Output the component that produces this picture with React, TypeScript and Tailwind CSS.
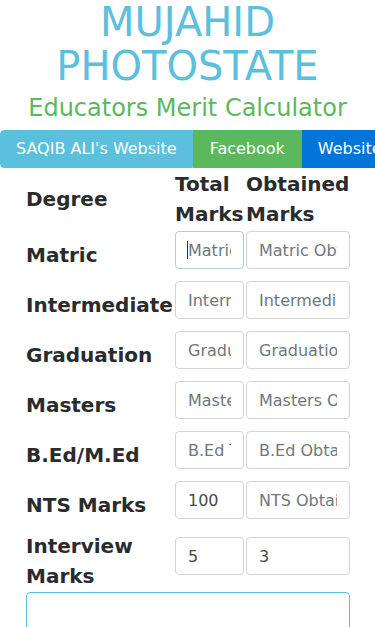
import React from "react";

const rows: { label: string; total: string; obtained: string; tv?: string; ov?: string }[] = [
  { label: "Matric", total: "Matric Total", obtained: "Matric Obtained" },
  { label: "Intermediate", total: "Intermediate Total", obtained: "Intermediate Obtained" },
  { label: "Graduation", total: "Graduation Total", obtained: "Graduation Obtained" },
  { label: "Masters", total: "Masters Total", obtained: "Masters Obtained" },
  { label: "B.Ed/M.Ed", total: "B.Ed Total", obtained: "B.Ed Obtained" },
  { label: "NTS Marks", total: "NTS Total", obtained: "NTS Obtained", tv: "100" },
  { label: "Interview Marks", total: "Interview Total", obtained: "Interview Obtained", tv: "5", ov: "3" },
];

function Field({ placeholder, value, focused }: { placeholder: string; value?: string; focused?: boolean }) {
  return (
    <div className="relative mb-[10px]">
      <input
        readOnly
        defaultValue={value}
        placeholder={placeholder}
        className={
          "block h-[38px] w-full rounded-[4px] border bg-white px-[12px] py-[6px] text-[16px] leading-[24px] text-[#464a4c] placeholder:text-[#6f777c] outline-none " +
          (focused ? "border-[#b9c9d9]" : "border-[#d5d5d5]")
        }
      />
      {focused && <span className="absolute left-[12px] top-[10px] h-[18px] w-px bg-[#333]" />}
    </div>
  );
}

export default function App() {
  return (
    <div className="min-h-[627px] overflow-hidden bg-white font-['DejaVu_Sans',sans-serif] text-[#292b2c]">
      <h1 className="m-0 text-center text-[40px] leading-[44px] font-normal text-[#5bc0de]">
        MUJAHID
        <br />
        PHOTOSTATE
      </h1>
      <h3 className="mt-[7px] mb-[9px] text-center text-[24px] leading-[26px] font-normal text-[#5cb85c]">
        Educators Merit Calculator
      </h3>
      <div className="flex w-[375px] overflow-hidden whitespace-nowrap">
        <div className="shrink-0 rounded-l-[4px] border border-[#5bc0de] bg-[#5bc0de] px-[15px] py-[6px] text-[16px] leading-[24px] text-white">
          SAQIB ALI's Website
        </div>
        <div className="shrink-0 border border-[#5cb85c] bg-[#5cb85c] px-[16px] py-[6px] text-[16px] leading-[24px] text-white">
          Facebook
        </div>
        <div className="shrink-0 border border-[#0275d8] bg-[#0275d8] px-[15px] py-[6px] text-[16px] leading-[24px] text-white">
          Website
        </div>
      </div>
      <div className="pl-[25px]">
        <div className="grid grid-cols-[149px_71px_106px] items-center text-[20px] leading-[30px] font-bold">
          <div className="p-px">Degree</div>
          <div className="p-px">Total Marks</div>
          <div className="p-px">Obtained Marks</div>
          {rows.map((r, i) => (
            <React.Fragment key={r.label}>
              <div className="p-px">{r.label}</div>
              <div className="p-px font-normal">
                <Field placeholder={r.total} value={r.tv} focused={i === 0} />
              </div>
              <div className="p-px font-normal">
                <Field placeholder={r.obtained} value={r.ov} />
              </div>
            </React.Fragment>
          ))}
        </div>
        <div className="mx-px w-[324px]">
          <textarea
            readOnly
            className="block h-[80px] w-full resize-none rounded-[4px] border border-[#5bc0de] bg-white outline-none"
          />
        </div>
      </div>
    </div>
  );
}
